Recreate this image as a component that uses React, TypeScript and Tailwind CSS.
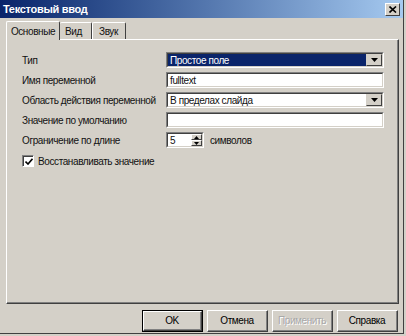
import React from "react";

const font = { fontFamily: '"Liberation Sans", Arial, sans-serif' };

function Sunken({ className = "", children }: { className?: string; children?: React.ReactNode }) {
  return (
    <div className={`shrink-0 border-t border-l border-t-[#808080] border-l-[#808080] border-b border-r border-b-white border-r-white ${className}`}>
      <div className="h-full w-full border-t border-l border-t-[#404040] border-l-[#404040] border-b border-r border-b-[#d4d0c8] border-r-[#d4d0c8] bg-white flex items-center">
        {children}
      </div>
    </div>
  );
}

function Arrow() {
  return (
    <div className="h-full w-[16px] shrink-0 bg-[#d4d0c8] border-t border-l border-t-[#d4d0c8] border-l-[#d4d0c8] border-b border-r border-b-[#404040] border-r-[#404040] flex items-center justify-center">
      <svg width="7" height="4" viewBox="0 0 7 4"><path d="M0 0h7L3.5 4z" fill="#000" /></svg>
    </div>
  );
}

function Btn({ label, def, disabled }: { label: string; def?: boolean; disabled?: boolean }) {
  return (
    <div className={`h-[22px] w-[61px] ${def ? "border border-black" : ""}`}>
      <div className="h-full w-full border-t border-l border-t-white border-l-white border-b border-r border-b-[#404040] border-r-[#404040]">
        <div className="h-full w-full border-b border-r border-b-[#808080] border-r-[#808080] flex items-center justify-center">
          <span className={`whitespace-nowrap ${disabled ? "text-[#a8a8a8] [text-shadow:1px_1px_0_#fff]" : "text-black"}`}>{label}</span>
        </div>
      </div>
    </div>
  );
}

function Label({ children }: { children: React.ReactNode }) {
  return <span className="w-[144px] shrink-0 whitespace-nowrap">{children}</span>;
}

export default function App() {
  return (
    <div style={font} className="w-[406px] h-[336px] bg-[#d4d0c8] text-[10px] tracking-[-0.4px] text-[#111] overflow-hidden">
      <div className="w-[404px] h-[334px] border-r border-r-[#404040] border-b border-b-[#404040] flex flex-col">
        {/* Title bar */}
        <div className="h-[18px] shrink-0 bg-gradient-to-r from-[#0a246a] to-[#a6caf0] flex items-center justify-between pl-[3px] pr-[3px]">
          <span className="text-white font-bold text-[11px] tracking-[-0.3px]">Текстовый ввод</span>
          <div className="w-[15px] h-[13px] bg-[#d4d0c8] border-t border-l border-t-white border-l-white border-b border-r border-b-[#404040] border-r-[#404040] flex items-center justify-center">
            <svg width="8" height="7" viewBox="0 0 8 7"><path d="M0.5 0.5L7 6.5M7 0.5L0.5 6.5" stroke="#000" strokeWidth="1.6" /></svg>
          </div>
        </div>

        {/* Tabs */}
        <div className="flex items-end pl-[6px] mt-[3px] h-[18px] shrink-0">
          <div className="relative z-10 h-[19px] w-[54px] -mb-px border-t border-l border-t-white border-l-white border-r border-r-[#404040] rounded-t-[2px] bg-[#d4d0c8] flex items-center justify-center">
            <span>Основные</span>
          </div>
          <div className="h-[17px] border-t border-t-white border-r border-r-[#404040] rounded-t-[2px] pl-[5px] w-[32px] flex items-center">
            <span>Вид</span>
          </div>
          <div className="h-[17px] border-t border-l border-t-white border-l-white border-r border-r-[#404040] rounded-t-[2px] pl-[6px] w-[34px] flex items-center">
            <span>Звук</span>
          </div>
        </div>

        {/* Panel */}
        <div className="ml-[6px] w-[393px] h-[265px] shrink-0 border-t border-l border-t-white border-l-white border-b border-r border-b-[#404040] border-r-[#404040]">
          <div className="h-full w-full border-b border-r border-b-[#808080] border-r-[#808080] pt-[12px] pl-[15px] flex flex-col gap-[4px]">
            <div className="flex items-center h-[16px]">
              <Label>Тип</Label>
              <Sunken className="w-[218px] h-[16px]">
                <div className="flex-1 h-full bg-[#0a246a] text-white flex items-center pl-[2px]">Простое поле</div>
                <Arrow />
              </Sunken>
            </div>
            <div className="flex items-center h-[16px]">
              <Label>Имя переменной</Label>
              <Sunken className="w-[218px] h-[16px]">
                <span className="pl-[2px]">fulltext</span>
              </Sunken>
            </div>
            <div className="flex items-center h-[16px]">
              <Label>Область действия переменной</Label>
              <Sunken className="w-[218px] h-[16px]">
                <div className="flex-1 pl-[2px]">В пределах слайда</div>
                <Arrow />
              </Sunken>
            </div>
            <div className="flex items-center h-[16px]">
              <Label>Значение по умолчанию</Label>
              <Sunken className="w-[218px] h-[16px]" />
            </div>
            <div className="flex items-center h-[16px]">
              <Label>Ограничение по длине</Label>
              <Sunken className="w-[38px] h-[16px]">
                <div className="flex-1 pl-[2px]">5</div>
                <div className="w-[11px] h-full flex flex-col">
                  <div className="flex-1 bg-[#d4d0c8] border-t border-l border-t-white border-l-white border-b border-r border-b-[#404040] border-r-[#404040] flex items-center justify-center">
                    <svg width="5" height="3" viewBox="0 0 5 3"><path d="M0 3h5L2.5 0z" fill="#000" /></svg>
                  </div>
                  <div className="flex-1 bg-[#d4d0c8] border-t border-l border-t-white border-l-white border-b border-r border-b-[#404040] border-r-[#404040] flex items-center justify-center">
                    <svg width="5" height="3" viewBox="0 0 5 3"><path d="M0 0h5L2.5 3z" fill="#000" /></svg>
                  </div>
                </div>
              </Sunken>
              <span className="ml-[6px]">символов</span>
            </div>
            <div className="flex items-center h-[16px] mt-[1px]">
              <div className="w-[12px] h-[12px] border-t border-l border-t-[#808080] border-l-[#808080] border-b border-r border-b-white border-r-white">
                <div className="w-full h-full bg-white border-t border-l border-t-[#404040] border-l-[#404040] flex items-center justify-center">
                  <svg width="8" height="7" viewBox="0 0 8 7"><path d="M0.5 3.5L3 6L7.5 0.8" stroke="#000" strokeWidth="1.6" fill="none" /></svg>
                </div>
              </div>
              <span className="ml-[4px]">Восстанавливать значение</span>
            </div>
          </div>
        </div>

        {/* Buttons */}
        <div className="flex justify-end gap-[4px] pr-[5px] mt-[6px]">
          <Btn label="OK" def />
          <Btn label="Отмена" />
          <Btn label="Применить" disabled />
          <Btn label="Справка" />
        </div>
      </div>
    </div>
  );
}
